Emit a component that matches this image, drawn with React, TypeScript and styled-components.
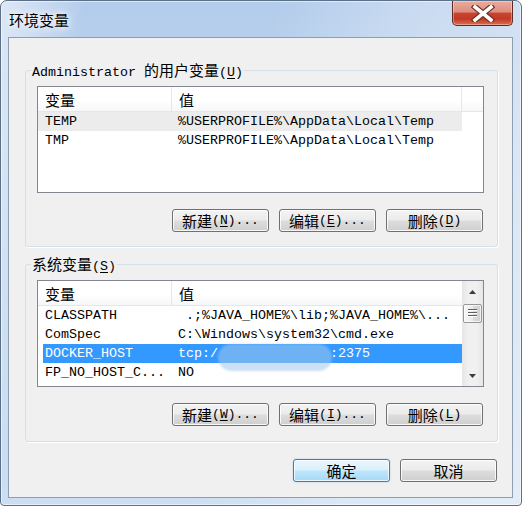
import React from 'react';
import styled, { createGlobalStyle } from 'styled-components';

const LATIN = `"Liberation Mono", "Noto Sans CJK SC", monospace`;
const CJKF = `"Noto Sans CJK SC", "Noto Sans", sans-serif`;

const GlobalStyle = createGlobalStyle`
  html, body { margin: 0; padding: 0; }
  body { background: #ffffff; overflow: hidden; }
  *, *::before, *::after { box-sizing: border-box; }
`;

const Window = styled.div`
  width: 522px;
  height: 506px;
  border: 1px solid #5b6f86;
  border-radius: 7px 7px 4px 4px;
  padding: 0 8px 7px 7px;
  display: flex;
  flex-direction: column;
  background:
    linear-gradient(100deg, rgba(255,255,255,0.55) 0%, rgba(255,255,255,0) 14%, rgba(255,255,255,0) 45%, rgba(255,255,255,0.3) 70%, rgba(255,255,255,0.45) 100%),
    linear-gradient(180deg, #b3cceb 0%, #c0d6ef 30%, #cbdef3 100%);
  box-shadow: inset 0 0 0 1px rgba(255,255,255,0.55);
  overflow: hidden;
`;

const TitleBar = styled.div`
  height: 36px;
  flex: none;
  display: flex;
  justify-content: space-between;
  align-items: flex-start;
`;

const Title = styled.div`
  margin: 9px 0 0 1px;
  font: 15px/20px ${CJKF};
  color: #000;
  text-shadow: 0 0 6px #fff, 0 0 10px rgba(255,255,255,0.9);
`;

const CloseButton = styled.div`
  width: 61px;
  height: 25px;
  border: 1px solid #5e2a24;
  border-top: none;
  border-radius: 0 0 5px 5px;
  background: linear-gradient(180deg, #e9ab9d 0%, #de8f7f 45%, #c9432f 52%, #c23a27 75%, #d8704f 100%);
  box-shadow: inset 0 0 0 1px rgba(255,255,255,0.35);
  display: flex;
  align-items: center;
  justify-content: center;
`;

const Client = styled.div`
  flex: 1;
  border: 1px solid #8f9db0;
  background: #f0f0f0;
  display: flex;
  flex-direction: column;
  padding: 24px 14px 15px 16px;
`;

const Group = styled.fieldset<{ $pb: number; $gap?: number }>`
  margin: ${p => p.$gap ?? 0}px 0 0 0;
  padding: 8px 13px ${p => p.$pb}px 11px;
  border: 1px solid #d5dfe5;
  border-radius: 3px;
  min-width: 0;
  box-shadow: 1px 1px 0 #ffffff;
`;

const Legend = styled.legend`
  margin-left: -6px;
  padding: 0 1px;
  height: 16px;
  font: 13.33px/16px ${LATIN};
  color: #000;
  white-space: pre;
`;

const Cjk = styled.span`
  font-family: ${CJKF};
  font-size: 15px;
  line-height: 1;
`;

const Mn = styled.span`
  text-decoration: underline;
  text-underline-offset: 2px;
`;

const ListBox = styled.div`
  height: 107px;
  border: 1px solid #828790;
  background: #ffffff;
  display: flex;
  overflow: hidden;
`;

const ListMain = styled.div`
  flex: 1;
  min-width: 0;
  display: flex;
  flex-direction: column;
  overflow: hidden;
`;

const Header = styled.div`
  height: 25px;
  flex: none;
  display: flex;
  border-bottom: 1px solid #e3e6ea;
  background: linear-gradient(180deg, #ffffff 0%, #ffffff 55%, #f6f7f9 100%);
`;

const HeadCell = styled.div<{ $w?: number; $last?: boolean }>`
  width: ${p => (p.$w ? `${p.$w}px` : 'auto')};
  flex: ${p => (p.$w ? 'none' : '1')};
  border-right: ${p => (p.$last ? 'none' : '1px solid #e3e6ea')};
  padding-left: 7px;
  display: flex;
  align-items: center;
  font: 13.33px/24px ${LATIN};
  color: #000;
`;

const Rows = styled.div`
  position: relative;
  flex: 1;
`;

const Row = styled.div<{ $sel?: boolean; $hot?: boolean }>`
  width: 424px;
  height: 19px;
  display: flex;
  background: ${p =>
    p.$sel
      ? 'linear-gradient(90deg, transparent 5px, #3399ff 5px)'
      : p.$hot
      ? '#ececec'
      : 'transparent'};
  color: ${p => (p.$sel ? '#ffffff' : '#000000')};
  font: 13.33px/19px ${LATIN};
  white-space: pre;
`;

const NameCell = styled.div`
  width: 134px;
  flex: none;
  padding-left: 7px;
  overflow: hidden;
`;

const ValueCell = styled.div`
  position: relative;
  flex: 1;
  padding-left: 6px;
`;

const Redact = styled.div`
  position: absolute;
  left: 46px;
  top: 0;
  width: 114px;
  height: 27px;
  border-radius: 14px;
  background: rgba(161, 199, 235, 0.55);
  filter: blur(1.2px);
  pointer-events: none;
`;

const ScrollBar = styled.div`
  width: 21px;
  flex: none;
  display: flex;
  flex-direction: column;
  background: linear-gradient(90deg, #e6e6e6 0%, #f0f0f0 30%, #f0f0f0 70%, #e6e6e6 100%);
`;

const ScrollBtn = styled.div`
  height: 21px;
  flex: none;
  display: flex;
  align-items: center;
  justify-content: center;
`;

const Track = styled.div`
  flex: 1;
  padding: 2px 1px 0 1px;
`;

const Thumb = styled.div`
  width: 19px;
  height: 19px;
  border: 1px solid #979797;
  border-radius: 2px;
  background: linear-gradient(90deg, #f6f6f6 0%, #ececec 50%, #dcdcdc 51%, #d0d0d0 100%);
  box-shadow: inset 0 0 0 1px rgba(255,255,255,0.7);
  display: flex;
  align-items: center;
  justify-content: center;
`;

const ButtonRow = styled.div`
  display: flex;
  justify-content: flex-end;
  gap: 10px;
  margin-top: 16px;
  padding-right: 1px;
`;

const Footer = styled.div`
  display: flex;
  justify-content: flex-end;
  gap: 10px;
  margin-top: 17px;
  padding-right: 1px;
`;

const Btn = styled.button<{ $primary?: boolean }>`
  width: 97px;
  height: 23px;
  padding: 0;
  margin: 0;
  border: 1px solid ${p => (p.$primary ? '#3c7fb1' : '#707070')};
  border-radius: 3px;
  background: ${p =>
    p.$primary
      ? 'linear-gradient(180deg, #eaf6fd 0%, #d9f0fc 48%, #bee6fd 52%, #a7d9f5 100%)'
      : 'linear-gradient(180deg, #f3f3f3 0%, #ebebeb 48%, #dddddd 52%, #cfcfcf 100%)'};
  box-shadow: ${p =>
    p.$primary
      ? 'inset 0 0 0 1px rgba(255,255,255,0.75), 0 0 2px rgba(60,127,177,0.35)'
      : 'inset 0 0 0 1px rgba(255,255,255,0.8)'};
  font: 13px/21px ${LATIN};
  color: #000;
  white-space: pre;
  display: flex;
  align-items: center;
  justify-content: center;
`;

const CJK_RE = /([\u3000-\u9fff\uff00-\uffef]+)/;

function txt(s: string): React.ReactNode[] {
  const out: React.ReactNode[] = [];
  let k = 0;
  s.split(/(&.)/).forEach(seg => {
    if (!seg) return;
    if (seg.length === 2 && seg[0] === '&') {
      out.push(<Mn key={k++}>{seg[1]}</Mn>);
      return;
    }
    seg.split(CJK_RE).forEach(p => {
      if (!p) return;
      if (CJK_RE.test(p)) out.push(<Cjk key={k++}>{p}</Cjk>);
      else out.push(<React.Fragment key={k++}>{p}</React.Fragment>);
    });
  });
  return out;
}

type Var = { n: string; v: string; sel?: boolean; hot?: boolean; redact?: boolean };

const userVars: Var[] = [
  { n: 'TEMP', v: '%USERPROFILE%\\AppData\\Local\\Temp', hot: true },
  { n: 'TMP', v: '%USERPROFILE%\\AppData\\Local\\Temp' },
];

const sysVars: Var[] = [
  { n: 'CLASSPATH', v: ' .;%JAVA_HOME%\\lib;%JAVA_HOME%\\...' },
  { n: 'ComSpec', v: 'C:\\Windows\\system32\\cmd.exe' },
  { n: 'DOCKER_HOST', v: 'tcp:/              :2375', sel: true, redact: true },
  { n: 'FP_NO_HOST_C...', v: 'NO' },
];

const CloseGlyph = () => (
  <svg width="24" height="17" viewBox="0 0 24 17">
    <path d="M4 2 L20 15 M20 2 L4 15" stroke="#6b2c25" strokeWidth="6" strokeLinecap="square" fill="none" />
    <path d="M4 2 L20 15 M20 2 L4 15" stroke="#ffffff" strokeWidth="3.6" strokeLinecap="square" fill="none" />
  </svg>
);

const Arrow = ({ up }: { up?: boolean }) => (
  <svg width="7" height="4" viewBox="0 0 7 4">
    <polygon points={up ? '0,4 3.5,0 7,4' : '0,0 7,0 3.5,4'} fill="#3d3d3d" />
  </svg>
);

const Grip = () => (
  <svg width="9" height="9" viewBox="0 0 9 9">
    {[1, 4, 7].map(y => (
      <g key={y}>
        <rect x="0" y={y - 1} width="9" height="1" fill="#5f5f5f" />
        <rect x="0" y={y} width="9" height="1" fill="#ffffff" />
      </g>
    ))}
  </svg>
);

const VarList = ({ vars, scroll }: { vars: Var[]; scroll?: boolean }) => (
  <ListBox>
    <ListMain>
      <Header>
        <HeadCell $w={134}>{txt('变量')}</HeadCell>
        <HeadCell $w={290} $last={!!scroll}>{txt('值')}</HeadCell>
        {!scroll && <HeadCell $last />}
      </Header>
      <Rows>
        {vars.map(r => (
          <Row key={r.n} $sel={r.sel} $hot={r.hot}>
            <NameCell>{r.n}</NameCell>
            <ValueCell>
              {r.v}
              {r.redact && <Redact />}
            </ValueCell>
          </Row>
        ))}
      </Rows>
    </ListMain>
    {scroll && (
      <ScrollBar>
        <ScrollBtn>
          <Arrow up />
        </ScrollBtn>
        <Track>
          <Thumb>
            <Grip />
          </Thumb>
        </Track>
        <ScrollBtn>
          <Arrow />
        </ScrollBtn>
      </ScrollBar>
    )}
  </ListBox>
);

export default function App() {
  return (
    <>
      <GlobalStyle />
      <Window>
        <TitleBar>
          <Title>环境变量</Title>
          <CloseButton>
            <CloseGlyph />
          </CloseButton>
        </TitleBar>
        <Client>
          <Group $pb={14}>
            <Legend>{txt('Administrator 的用户变量(&U)')}</Legend>
            <VarList vars={userVars} />
            <ButtonRow>
              <Btn>{txt('新建(&N)...')}</Btn>
              <Btn>{txt('编辑(&E)...')}</Btn>
              <Btn>{txt('删除(&D)')}</Btn>
            </ButtonRow>
          </Group>
          <Group $pb={15} $gap={9}>
            <Legend>{txt('系统变量(&S)')}</Legend>
            <VarList vars={sysVars} scroll />
            <ButtonRow>
              <Btn>{txt('新建(&W)...')}</Btn>
              <Btn>{txt('编辑(&I)...')}</Btn>
              <Btn>{txt('删除(&L)')}</Btn>
            </ButtonRow>
          </Group>
          <Footer>
            <Btn $primary>{txt('确定')}</Btn>
            <Btn>{txt('取消')}</Btn>
          </Footer>
        </Client>
      </Window>
    </>
  );
}
